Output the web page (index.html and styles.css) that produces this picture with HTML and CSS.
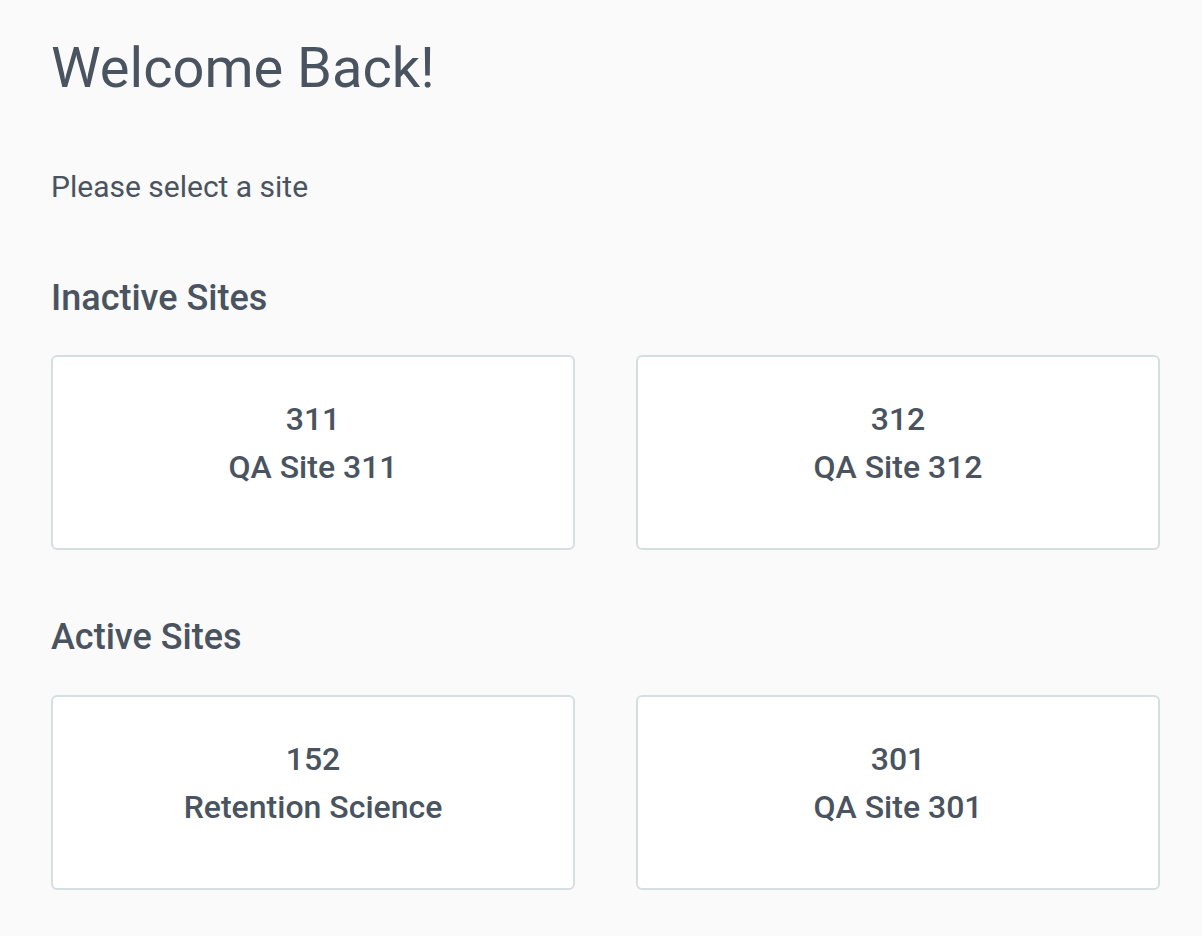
FILE: index.html
```html
<!DOCTYPE html>
<html lang="en">
<head>
    <meta charset="UTF-8">
    <meta name="viewport" content="width=device-width, initial-scale=1.0">
    <title>Select a site</title>
    <link rel="stylesheet" href="styles.css">
</head>
<body>
    <div class="page">
        <h1>Welcome Back!</h1>
        <p class="subtitle">Please select a site</p>

        <div class="site-group">
            <h2>Inactive Sites</h2>
            <div class="site-grid">
                <div class="site-card">
                    <div class="site-id">311</div>
                    <div class="site-name">QA Site 311</div>
                </div>
                <div class="site-card">
                    <div class="site-id">312</div>
                    <div class="site-name">QA Site 312</div>
                </div>
            </div>
        </div>

        <div class="site-group">
            <h2>Active Sites</h2>
            <div class="site-grid">
                <div class="site-card">
                    <div class="site-id">152</div>
                    <div class="site-name">Retention Science</div>
                </div>
                <div class="site-card">
                    <div class="site-id">301</div>
                    <div class="site-name">QA Site 301</div>
                </div>
            </div>
        </div>
    </div>
</body>
</html>
```

FILE: styles.css
```css
body, html {
    margin: 0;
    padding: 0;
    background: #fafafa;
    font-family: 'Roboto', 'Liberation Sans', sans-serif;
    color: #4a5360;
}
.page {
    padding: 35px 42px 40px 51px;
}
h1 {
    margin: 0;
    font-size: 56px;
    font-weight: 400;
    line-height: 1.2;
}
.subtitle {
    margin: 67px 0 0;
    font-size: 30px;
    line-height: 1.2;
}
.site-group {
    margin-top: 66px;
}
.site-group:first-of-type {
    margin-top: 72px;
}
h2 {
    margin: 0 0 36px;
    font-size: 36px;
    font-weight: 500;
    line-height: 1.2;
}
.site-group:first-of-type h2 {
    margin-bottom: 35px;
}
.site-grid {
    display: grid;
    grid-template-columns: 1fr 1fr;
    gap: 61px;
}
.site-card {
    background: #fff;
    border: 2px solid #d6dfdf;
    border-radius: 6px;
    padding: 43px 16px 62px;
    text-align: center;
    font-size: 32px;
    font-weight: 500;
    line-height: 1.2;
    cursor: pointer;
}
.site-name {
    margin-top: 9px;
}
```
